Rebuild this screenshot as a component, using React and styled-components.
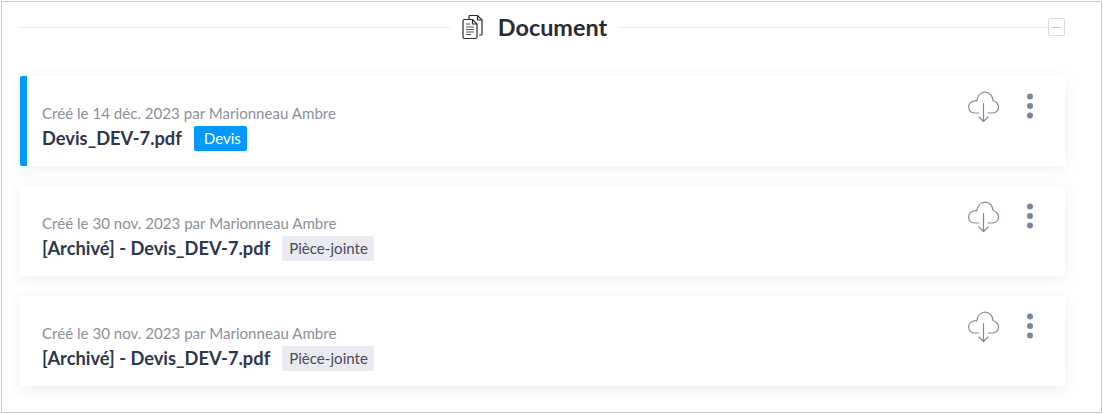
import React from "react";
import styled, { createGlobalStyle } from "styled-components";

const Global = createGlobalStyle`
  html, body { margin: 0; padding: 0; background: #fff; }
  body { font-family: "Lato", "Liberation Sans", sans-serif; }
`;

const Panel = styled.section`
  box-sizing: border-box;
  width: 1101px;
  height: 412px;
  margin: 1px 0 0 1px;
  border: 1px solid #c9c9c9;
  padding: 0 36px 0 18px;
`;
const Header = styled.header`
  display: flex;
  align-items: center;
  height: 50px;
`;
const Line = styled.div`
  flex: ${(props) => props.size};
  height: 1px;
  background: #e8e8e8;
`;
const TitleWrap = styled.div`
  display: flex;
  align-items: center;
  gap: 14px;
  padding: 0 13px 0 11px;
`;
const Title = styled.h2`
  margin: 0;
  font-size: 23.4px;
  line-height: 26px;
  font-weight: 700;
  color: #2b2b33;
`;
const Collapse = styled.button`
  display: flex;
  align-items: center;
  justify-content: center;
  box-sizing: border-box;
  width: 17px;
  height: 18px;
  padding: 0;
  border: 1px solid #dcdcdc;
  border-radius: 2px;
  background: #fff;
  &::before {
    content: "";
    width: 9px;
    height: 1px;
    background: #c4c4c4;
  }
`;
const List = styled.div`
  display: flex;
  flex-direction: column;
  gap: 20px;
  margin-top: 24px;
`;
const Card = styled.article`
  display: flex;
  justify-content: space-between;
  box-sizing: border-box;
  height: 90px;
  padding: 15px 31px 0 ${(props) => (props.$accent ? "15px" : "22px")};
  border-left: ${(props) => (props.$accent ? "7px solid #0099ff" : "0")};
  border-radius: 2px;
  background: #fff;
  box-shadow: 0 3px 14px rgba(60, 70, 110, 0.09);
`;
const Info = styled.div`
  display: flex;
  flex-direction: column;
  padding-top: 12px;
`;
const Meta = styled.div`
  font-size: 15.1px;
  line-height: 20px;
  color: #8d8f9c;
`;
const NameRow = styled.div`
  display: flex;
  align-items: center;
  gap: 12px;
  margin-top: 3px;
`;
const Name = styled.div`
  font-size: 18.3px;
  line-height: 25px;
  font-weight: 700;
  color: #30364b;
`;
const Tag = styled.span`
  height: 25px;
  line-height: 25px;
  border-radius: 2px;
  font-size: 15.1px;
  color: ${(props) => (props.$primary ? "#fff" : "#4d4a5c")};
  background: ${(props) => (props.$primary ? "#0099ff" : "#e9ebf0")};
  padding: 0 6px 0 ${(props) => (props.$primary ? "10px" : "7px")};
`;
const Actions = styled.div`
  display: flex;
  align-items: flex-start;
  gap: 26px;
`;
const CloudBtn = styled.div`
  display: flex;
`;
const DotsBtn = styled.div`
  display: flex;
  margin-top: 2px;
`;

const DocIcon = () => (
  <svg width="22" height="26" viewBox="0 0 22 26" fill="none" stroke="#2b2b33" strokeWidth="1.2">
    <path d="M7 5V2.500A1 1 0 0 1 8 1.500h7.500l4.500 4.500v14a1 1 0 0 1-1 1h-2" />
    <path d="M15.500 1.500V6H20" />
    <path d="M2.500 5.500h8l4.500 4.500v13a1.500 1.500 0 0 1-1.500 1.500H2.500A1.500 1.500 0 0 1 1 23V7a1.500 1.500 0 0 1 1.500-1.500z" fill="#fff" />
    <path d="M10.500 5.500V10H15" />
    <path d="M4 10h4M4 13h8M4 15.500h8M4 18h8M4 20.500h5" strokeWidth="1" stroke="#555" />
  </svg>
);

const CloudIcon = () => (
  <svg width="32" height="32" viewBox="0 0 32 32" fill="none" stroke="#808a9c" strokeWidth="1.200" strokeLinecap="round" strokeLinejoin="round">
    <path d="M11 22H6.500C3 22 .7 19.500 .7 16.300C.7 13 3 10.200 6.500 9.800C7.200 9.700 8 9.700 8.800 9.800C9.500 5 12.500 1.200 17 1.200C21.500 1.200 24.800 4.800 25 9.500C28 10.500 30.500 13 30.500 16.300C30.500 19.500 28 22 24.500 22H20" />
    <path d="M15.500 12.500V30.500M11 26l4.500 4.500 4.500-4.500" />
  </svg>
);

const DotsIcon = () => (
  <svg width="8" height="26" viewBox="0 0 8 26" fill="#76859c">
    <circle cx="4" cy="3.500" r="3" />
    <circle cx="4" cy="13" r="3" />
    <circle cx="4" cy="22.500" r="3" />
  </svg>
);

const documents = [
  { meta: "Créé le 14 déc. 2023 par Marionneau Ambre", name: "Devis_DEV-7.pdf", tag: "Devis", primary: true },
  { meta: "Créé le 30 nov. 2023 par Marionneau Ambre", name: "[Archivé] - Devis_DEV-7.pdf", tag: "Pièce-jointe" },
  { meta: "Créé le 30 nov. 2023 par Marionneau Ambre", name: "[Archivé] - Devis_DEV-7.pdf", tag: "Pièce-jointe" },
];

export default function App() {
  return (
    <>
      <Global />
      <Panel>
        <Header>
          <Line size="430" />
          <TitleWrap>
            <DocIcon />
            <Title>Document</Title>
          </TitleWrap>
          <Line size="427" />
          <Collapse aria-label="Réduire" />
        </Header>
        <List>
          {documents.map((doc, i) => (
            <Card key={i} $accent={doc.primary}>
              <Info>
                <Meta>{doc.meta}</Meta>
                <NameRow>
                  <Name>{doc.name}</Name>
                  <Tag $primary={doc.primary}>{doc.tag}</Tag>
                </NameRow>
              </Info>
              <Actions>
                <CloudBtn><CloudIcon /></CloudBtn>
                <DotsBtn><DotsIcon /></DotsBtn>
              </Actions>
            </Card>
          ))}
        </List>
      </Panel>
    </>
  );
}
